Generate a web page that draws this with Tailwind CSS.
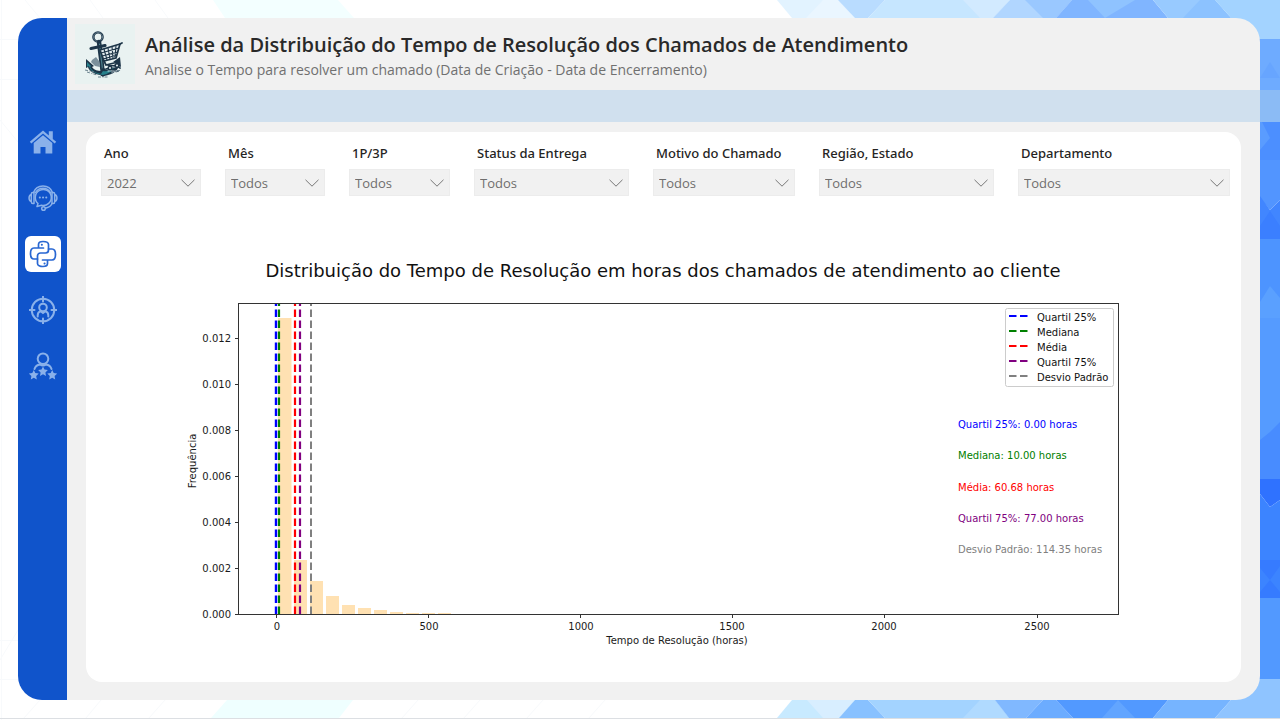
<!DOCTYPE html>
<html lang="pt-BR">
<head>
<meta charset="utf-8">
<meta name="viewport" content="width=device-width, initial-scale=1">
<title>Análise da Distribuição do Tempo de Resolução</title>
<script src="https://cdn.jsdelivr.net/npm/@tailwindcss/browser@4"></script>
</head>
<body class="relative isolate flex min-h-screen overflow-x-hidden bg-white pt-[18px] pr-5 pb-5 pl-[18px] font-['Open_Sans','Noto_Sans',sans-serif]">

<!-- Triangle mosaic behind the panel -->
<svg class="absolute inset-0 -z-10 h-full w-full" viewBox="0 0 1280 720" preserveAspectRatio="none" aria-hidden="true">
  <g stroke="#f8fafc" fill="none">
    <path d="M1.500 0V720M0 39.500H20M0 79.500H20M0 640.500H20M0 679.500H20M25 0L40 18M90 0L103 18M155 0L168 18M40 700L24 718M101 700L86 718M165 700L149 718M418 700L402 718M480 700L464 718M543 700L527 718M605 700L589 718M0 120L18 142M0 660L18 630"/>
  </g>
  <path fill="#f3ffff" d="M213 0H338L354 18H225Z"/>
  <path fill="#efffff" d="M227 700H353L339 718H211Z"/>
  <path fill="#e2f3ff" d="M777 0H838L855 18H792Z"/>
  <path fill="#eaf6ff" d="M823 0L806 18H855L838 0Z"/>
  <path fill="#b9dcff" d="M838 0H885L868 18H855Z"/>
  <path fill="#c6e6ff" d="M885 0H1010L993 18H868Z"/>
  <path fill="#d2eaff" d="M963 0L980 18H993L1010 0Z"/>
  <path fill="#b1d6ff" d="M1010 0H1072L1056 18H993Z"/>
  <path fill="#9ac8ff" d="M1025 0H1072L1056 18H1043Z"/>
  <path fill="#80b5ff" d="M1072 0H1153L1168 18H1056Z"/>
  <path fill="#8fc3ff" d="M1088 0L1105 18L1135 0Z"/>
  <path fill="#98caff" d="M1153 0H1215L1231 18H1168Z"/>
  <path fill="#8cc2ff" d="M1200 0L1183 18H1231L1215 0Z"/>
  <path fill="#a3d3ff" d="M1215 0H1280V39H1250Z"/>
  <path fill="#6eabff" d="M1240 39H1280V122H1240Z"/>
  <path fill="#67a5ff" d="M1270 62L1280 78H1260Z"/>
  <path fill="#4c8fff" d="M1250 122H1280V160H1250Z"/>
  <path fill="#5a9cff" d="M1260 122H1262L1270 138L1260 150Z"/>
  <path fill="#5295ff" d="M1250 160H1280V200L1270 210L1260 198Z"/>
  <path fill="#4186ff" d="M1250 196H1260L1270 210L1280 200V239H1250Z"/>
  <path fill="#3b7fff" d="M1260 226L1270 211L1280 226V239H1260Z"/>
  <path fill="#4d94ff" d="M1250 239H1280V360H1250Z"/>
  <path fill="#5aa0ff" d="M1260 302L1270 286L1280 298V318H1260Z"/>
  <path fill="#559bff" d="M1260 318H1280V440H1260Z"/>
  <path fill="#488cff" d="M1260 440L1270 432L1280 422V479H1260Z"/>
  <path fill="#2f72ff" d="M1260 479H1280V500L1270 507L1260 494Z"/>
  <path fill="#3c84ff" d="M1260 494L1270 507L1280 500V598H1260Z"/>
  <path fill="#367bff" d="M1280 566L1270 580L1280 592V598H1260V592L1270 580L1260 568V560H1280Z"/>
  <path fill="#5299ff" d="M1250 598H1280V679H1250Z"/>
  <path fill="#c8eaff" d="M792 700H855L839 718H777Z"/>
  <path fill="#d8eeff" d="M807 700H855L839 718H823Z"/>
  <path fill="#88c1ff" d="M855 700H868L885 718H839Z"/>
  <path fill="#a3d3ff" d="M868 700H995L1009 718H885Z"/>
  <path fill="#b0daff" d="M980 700H995L1009 718H963Z"/>
  <path fill="#80b8ff" d="M995 700H1043L1026 718H1009Z"/>
  <path fill="#6cacff" d="M1043 700H1056L1073 718H1026Z"/>
  <path fill="#5299ff" d="M1056 700H1168L1153 718H1073Z"/>
  <path fill="#62a5ff" d="M1118 700L1135 718H1102Z"/>
  <path fill="#76b4ff" d="M1168 700H1231L1215 718H1153Z"/>
  <path fill="#8fc4ff" d="M1231 700L1258 679H1280V718H1215Z"/>
  <path stroke="#dcdfe3" d="M0 718.500H1280"/>
</svg>

<nav class="flex w-[49px] shrink-0 flex-col items-center gap-5 rounded-l-3xl bg-[#1054cb] pt-[106px] text-[#8ab1ea]" aria-label="Páginas">
  <a href="#inicio" aria-label="Início" class="flex h-9 w-9 items-center justify-center">
    <svg class="h-7 w-7" viewBox="0 0 28 28" fill="currentColor"><path d="M14 2.500L.8 13.800l1.500 1.700L14 5.600l11.700 9.900 1.500-1.700-3.400-2.900V3.200h-4v4.300z"/><path d="M14 7.200L4.700 15v10.500H11.500v-6.500h5v6.500h6.800V15z"/></svg>
  </a>
  <a href="#atendimento" aria-label="Atendimento" class="flex h-9 w-9 items-center justify-center">
    <svg class="h-8 w-8" viewBox="0 0 32 32" fill="none" stroke="currentColor" stroke-width="1.500" stroke-linecap="round" stroke-linejoin="round"><path d="M6.500 10.500C8 6.500 11.500 4 16 4s8 2.500 9.500 6.500M8.500 10.500C10 7.800 12.500 6.200 16 6.200s6 1.600 7.500 4.300"/><path d="M5.800 10.500H7v11H5.800a1.500 1.500 0 0 1-1.500-1.500v-8a1.500 1.500 0 0 1 1.500-1.500zM26.200 10.500H25v11h1.200a1.500 1.500 0 0 0 1.500-1.500v-8a1.500 1.500 0 0 0-1.500-1.500zM4.300 12.500c-3 .8-3 6.200 0 7M27.700 12.500c3 .8 3 6.200 0 7"/><path d="M11 21.500a8 8 0 1 1 3.500 1.800L10 24.500z"/><path d="M25 21.500c-1 2.500-3.500 4-6.500 4.700"/><circle cx="16.500" cy="26.500" r="1.800"/><path d="M12.800 15.500h.1M16 15.500h.1M19.200 15.500h.1" stroke-width="2"/></svg>
  </a>
  <a href="#python" aria-label="Análise em Python" aria-current="page" class="flex h-9 w-9 items-center justify-center rounded-md bg-white text-[#2967d2]">
    <svg class="h-7 w-7" viewBox="0 0 28 28" fill="none" stroke="currentColor" stroke-width="1.700" stroke-linecap="round" stroke-linejoin="round"><path d="M14.500 8H9.500V4.500C9.500 2.500 11 1.500 14 1.500s5.500 1 5.500 3v5.500a3 3 0 0 1-3 3h-5a3 3 0 0 0-3 3v3H5c-2.500 0-3.500-2-3.500-5.500S2.500 8 5 8h4.500"/><path d="M13.500 20h5v3.500c0 2-1.500 3-4.500 3s-5.500-1-5.500-3V19M18.500 20H23c2.500 0 3.500-2 3.500-5.500S25.500 9 23 9h-3.500"/><path d="M12.800 4.800h.1M15.500 23.400h.1" stroke-width="2"/></svg>
  </a>
  <a href="#publico" aria-label="Público-alvo" class="flex h-9 w-9 items-center justify-center">
    <svg class="h-7 w-7" viewBox="0 0 28 28" fill="none" stroke="currentColor" stroke-width="2" stroke-linecap="round" stroke-linejoin="round"><circle cx="14" cy="14" r="11.300"/><path d="M14 .5v5M14 22.500v5M.5 14h5M22.500 14h5"/><circle cx="14" cy="11.500" r="3.800"/><path d="M8.700 20.500v-1.300c0-2 1.300-3.500 3-4l2.300 1.900 2.300-1.900c1.700.5 3 2 3 4v1.300"/></svg>
  </a>
  <a href="#avaliacao" aria-label="Avaliações" class="flex h-9 w-9 items-center justify-center">
    <svg class="h-7 w-7" viewBox="0 0 28 28" fill="none" stroke="currentColor" stroke-width="2" stroke-linecap="round" stroke-linejoin="round"><circle cx="14" cy="6.800" r="5.300"/><path d="M5.500 17c.8-2.600 3-4.200 5.500-4.500 1.800 1.200 4.200 1.200 6 0 2.500.3 4.700 1.900 5.500 4.500"/><g fill="currentColor" stroke="none"><path d="M14 14.500l1.500 3.100 3.400.5-2.500 2.400.6 3.500-3-1.700-3 1.700.6-3.500-2.500-2.400 3.400-.5z"/><path d="M4.800 18l1.500 3.100 3.400.5-2.500 2.400.6 3.500-3-1.700-3 1.700.6-3.500-2.500-2.400 3.400-.5z"/><path d="M23.200 18l1.500 3.100 3.400.5-2.500 2.400.6 3.500-3-1.700-3 1.700.6-3.500-2.500-2.400 3.400-.5z"/></g></svg>
  </a>
</nav>

<div class="flex min-w-0 grow flex-col rounded-r-3xl bg-[#f1f1f1]">
  <header class="flex h-[72px] shrink-0 items-center gap-2.5 pl-2">
    <svg class="h-[60px] w-[60px] shrink-0" viewBox="0 0 60 60" role="img" aria-label="Âncora com carrinho de compras">
      <rect width="60" height="60" fill="#e9f2f1"/>
      <g fill="none" stroke="#1d3548" stroke-linecap="round" stroke-linejoin="round">
        <circle cx="23" cy="13" r="4.600" stroke-width="2.400"/>
        <circle cx="23" cy="13" r="4.600" stroke="#8fa7b3" stroke-width=".5"/>
        <path d="M24 18l4 32" stroke-width="4.500"/>
        <path d="M24.500 20l3.200 27" stroke="#4b7d8b" stroke-width="1.200"/>
        <path d="M16 24.500l14-3" stroke-width="3.200"/>
      </g>
      <path fill="#1d3548" d="M11 35l8 7-2 1c2 3 6 4 9 4l2-4 3 3c6-1 9-4 10-8l-3 0 7-5 1 10-2-1c-2 6-8 9-15 10l-1 1-3-2c-6-1-11-4-12-8l-2 1z"/>
      <path fill="#27808b" d="M12 38l4 4-1 1c2 4 6 6 11 7l2-3c3 1 8-1 11-4-2 5-6 7-11 8-7-1-13-4-14-9l-2 1z"/>
      <path fill="#7c909b" d="M17 36l4-3 3 4 1 6-5-1-4-4z"/>
      <path fill="#dfe9ec" stroke="#1d3548" stroke-width="1.700" stroke-linejoin="round" d="M25 26l20-6-4 14-12 3z"/>
      <path fill="none" stroke="#1d3548" stroke-width="1.100" d="M26 29l18-5M27 32l16-4M28 35l14-4M29 25l3 11M33 24l2 11M37 22.500l1 12M41 21.500l-1 12"/>
      <path fill="none" stroke="#1d3548" stroke-width="1.800" stroke-linecap="round" d="M29 37l2 4 12-3M45 20l2-1M33 41c4 3 8-2 12 3M31 45c4-2 8 4 12 2"/>
      <path fill="none" stroke="#dfe9ec" stroke-width=".9" stroke-linecap="round" d="M30 43c5-2 8 2 13-1M33 47c3-1 6 1 9 0"/>
      <g fill="#dfe9ec" stroke="#1d3548" stroke-width="1.400"><circle cx="35" cy="44" r="1.800"/><circle cx="42" cy="41.500" r="1.800"/></g>
      <path fill="none" stroke="#6b828e" stroke-width="1" stroke-dasharray="3 1.500 1 1" d="M10 46l9 2M12 48l10 3M36 49l10-3M23 53h11"/>
    </svg>
    <div class="min-w-0 pt-1.5">
      <h1 class="text-[20px] leading-[26px] font-semibold whitespace-nowrap text-[#292929]">Análise da Distribuição do Tempo de Resolução dos Chamados de Atendimento</h1>
      <p class="text-[14px] leading-6 whitespace-nowrap text-[#707070]">Analise o Tempo para resolver um chamado (Data de Criação - Data de Encerramento)</p>
    </div>
  </header>
  <div class="-mr-5 h-8 shrink-0 bg-[#acccea]/48"></div>

  <main class="mx-[19px] mt-2.5 mb-[18px] flex grow flex-col rounded-2xl bg-white">
    <form class="grid grid-cols-[100fr_100fr_101fr_155fr_142fr_175fr_212fr] gap-6 pt-3 pr-[11px] pl-[15px] text-[#252423]">
      <div class="min-w-0"><label for="ano" class="block pb-1.5 pl-[3px] font-['Noto_Sans',sans-serif] text-[13px] leading-[19px] font-medium whitespace-nowrap">Ano</label>
        <div class="relative"><select id="ano" class="h-[27px] w-full appearance-none border border-[#ececec] bg-[#f1f1f1] px-[5px] pt-0.5 text-[13px] text-[#6f6e6d]"><option>2022</option></select><svg class="pointer-events-none absolute top-2.5 right-1.5 h-2 w-3.5" viewBox="0 0 14 8" fill="none" stroke="#777"><path d="M.5.8L7 7.200 13.500.8"/></svg></div></div>
      <div class="min-w-0"><label for="mes" class="block pb-1.5 pl-[3px] font-['Noto_Sans',sans-serif] text-[13px] leading-[19px] font-medium whitespace-nowrap">Mês</label>
        <div class="relative"><select id="mes" class="h-[27px] w-full appearance-none border border-[#ececec] bg-[#f1f1f1] px-[5px] pt-0.5 text-[13px] text-[#6f6e6d]"><option>Todos</option></select><svg class="pointer-events-none absolute top-2.5 right-1.5 h-2 w-3.5" viewBox="0 0 14 8" fill="none" stroke="#777"><path d="M.5.8L7 7.200 13.500.8"/></svg></div></div>
      <div class="min-w-0"><label for="tipo" class="block pb-1.5 pl-[3px] font-['Noto_Sans',sans-serif] text-[13px] leading-[19px] font-medium whitespace-nowrap">1P/3P</label>
        <div class="relative"><select id="tipo" class="h-[27px] w-full appearance-none border border-[#ececec] bg-[#f1f1f1] px-[5px] pt-0.5 text-[13px] text-[#6f6e6d]"><option>Todos</option></select><svg class="pointer-events-none absolute top-2.5 right-1.5 h-2 w-3.5" viewBox="0 0 14 8" fill="none" stroke="#777"><path d="M.5.8L7 7.200 13.500.8"/></svg></div></div>
      <div class="min-w-0"><label for="status" class="block pb-1.5 pl-[3px] font-['Noto_Sans',sans-serif] text-[13px] leading-[19px] font-medium whitespace-nowrap">Status da Entrega</label>
        <div class="relative"><select id="status" class="h-[27px] w-full appearance-none border border-[#ececec] bg-[#f1f1f1] px-[5px] pt-0.5 text-[13px] text-[#6f6e6d]"><option>Todos</option></select><svg class="pointer-events-none absolute top-2.5 right-1.5 h-2 w-3.5" viewBox="0 0 14 8" fill="none" stroke="#777"><path d="M.5.8L7 7.200 13.500.8"/></svg></div></div>
      <div class="min-w-0"><label for="motivo" class="block pb-1.5 pl-[3px] font-['Noto_Sans',sans-serif] text-[13px] leading-[19px] font-medium whitespace-nowrap">Motivo do Chamado</label>
        <div class="relative"><select id="motivo" class="h-[27px] w-full appearance-none border border-[#ececec] bg-[#f1f1f1] px-[5px] pt-0.5 text-[13px] text-[#6f6e6d]"><option>Todos</option></select><svg class="pointer-events-none absolute top-2.5 right-1.5 h-2 w-3.5" viewBox="0 0 14 8" fill="none" stroke="#777"><path d="M.5.8L7 7.200 13.500.8"/></svg></div></div>
      <div class="min-w-0"><label for="regiao" class="block pb-1.5 pl-[3px] font-['Noto_Sans',sans-serif] text-[13px] leading-[19px] font-medium whitespace-nowrap">Região, Estado</label>
        <div class="relative"><select id="regiao" class="h-[27px] w-full appearance-none border border-[#ececec] bg-[#f1f1f1] px-[5px] pt-0.5 text-[13px] text-[#6f6e6d]"><option>Todos</option></select><svg class="pointer-events-none absolute top-2.5 right-1.5 h-2 w-3.5" viewBox="0 0 14 8" fill="none" stroke="#777"><path d="M.5.8L7 7.200 13.500.8"/></svg></div></div>
      <div class="min-w-0"><label for="depto" class="block pb-1.5 pl-[3px] font-['Noto_Sans',sans-serif] text-[13px] leading-[19px] font-medium whitespace-nowrap">Departamento</label>
        <div class="relative"><select id="depto" class="h-[27px] w-full appearance-none border border-[#ececec] bg-[#f1f1f1] px-[5px] pt-0.5 text-[13px] text-[#6f6e6d]"><option>Todos</option></select><svg class="pointer-events-none absolute top-2.5 right-1.5 h-2 w-3.5" viewBox="0 0 14 8" fill="none" stroke="#777"><path d="M.5.8L7 7.200 13.500.8"/></svg></div></div>
    </form>

    <svg class="mt-9 w-full font-['DejaVu_Sans',sans-serif]" viewBox="86 232 1155 430" role="img" aria-label="Histograma do tempo de resolução em horas">
      <text x="663" y="277" text-anchor="middle" class="fill-[#111] text-[18px]">Distribuição do Tempo de Resolução em horas dos chamados de atendimento ao cliente</text>
      <g fill="#ffe1b2">
        <path d="M278 318h13.500V614H278zM294 560h13V614H294zM310 581h13V614H310zM326 596h13V614H326zM342 605h13V614H342zM358 608h13V614H358zM374 610h13V614H374zM390 612h13V614H390zM406 613h13V614H406zM422 613h13V614H422zM438 613h13V614H438z"/>
      </g>
      <g fill="none" stroke-dasharray="7.400 3.600">
        <path d="M276 614V303.500" stroke="#0000ff" stroke-width="2.400"/>
        <path d="M279 614V303.500" stroke="#008000" stroke-width="2.200"/>
        <path d="M295 614V303.500" stroke="#ff0000" stroke-width="2.200"/>
        <path d="M300 614V303.500" stroke="#800080" stroke-width="2.200"/>
        <path d="M311 614V303.500" stroke="#808080" stroke-width="2"/>
      </g>
      <g fill="none" stroke="#333">
        <rect x="238.500" y="303.500" width="880" height="311"/>
        <path d="M235 614.500h3.500M235 568.500h3.500M235 522.500h3.500M235 476.500h3.500M235 430.500h3.500M235 384.500h3.500M235 338.500h3.500M276.500 614.500v3.500M428.500 614.500v3.500M580.500 614.500v3.500M732.500 614.500v3.500M884.500 614.500v3.500M1037.500 614.500v3.500"/>
      </g>
      <g text-anchor="end" class="fill-[#1a1a1a] text-[10px]">
        <text x="231" y="342">0.012</text><text x="231" y="388">0.010</text><text x="231" y="434">0.008</text><text x="231" y="480">0.006</text><text x="231" y="526">0.004</text><text x="231" y="572">0.002</text><text x="231" y="618">0.000</text>
      </g>
      <g text-anchor="middle" class="fill-[#1a1a1a] text-[10px]">
        <text x="277" y="630">0</text><text x="429" y="630">500</text><text x="581" y="630">1000</text><text x="732" y="630">1500</text><text x="884" y="630">2000</text><text x="1037" y="630">2500</text>
        <text x="677" y="644">Tempo de Resolução (horas)</text>
        <text transform="translate(196 461) rotate(-90)">Frequência</text>
      </g>
      <rect x="1005.500" y="308.500" width="108" height="78" rx="2" fill="#fff" stroke="#ccc"/>
      <g stroke-width="2" stroke-dasharray="7.500 3.500">
        <path d="M1009 316h19" stroke="#0000ff"/><path d="M1009 331h19" stroke="#008000"/><path d="M1009 346h19" stroke="#ff0000"/><path d="M1009 361h19" stroke="#800080"/><path d="M1009 376h19" stroke="#808080"/>
      </g>
      <g class="fill-[#111] text-[10px]">
        <text x="1037" y="321">Quartil 25%</text><text x="1037" y="336">Mediana</text><text x="1037" y="351">Média</text><text x="1037" y="366">Quartil 75%</text><text x="1037" y="381">Desvio Padrão</text>
      </g>
      <g class="text-[10px]">
        <text x="958" y="428" fill="#0000ff">Quartil 25%: 0.00 horas</text><text x="958" y="459" fill="#008000">Mediana: 10.00 horas</text><text x="958" y="491" fill="#ff0000">Média: 60.68 horas</text><text x="958" y="522" fill="#800080">Quartil 75%: 77.00 horas</text><text x="958" y="553" fill="#808080">Desvio Padrão: 114.35 horas</text>
      </g>
    </svg>
  </main>
</div>
</body>
</html>
